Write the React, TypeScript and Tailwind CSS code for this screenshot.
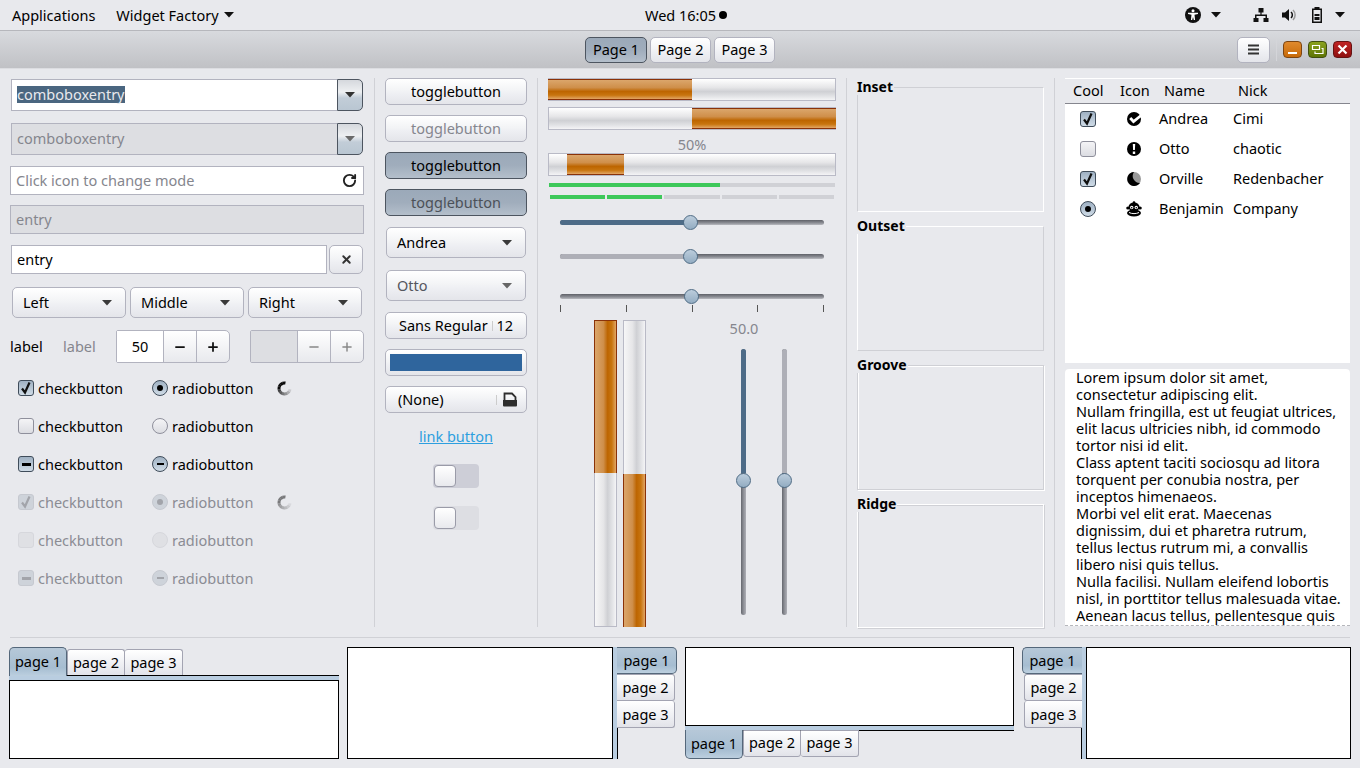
import React from "react";
import { RotateCw, X, Minus, Plus } from "lucide-react";

const FONT = "font-['Noto_Sans','Open_Sans',sans-serif] text-[14.5px] leading-[17px]";
const BTN = "border border-[#b2b3bf] rounded-[5px] bg-[linear-gradient(#ffffff,#f3f4f6_45%,#eeeff3_60%,#e4e5ea)] flex items-center";
const ACTIVE = "border border-[#4d5560] rounded-[5px] bg-[linear-gradient(#9ba9b9,#a0adbc_50%,#b4bfcb)] flex items-center";
const TROUGH = "bg-[linear-gradient(#ffffff,#e6e6e8_40%,#cfd0d4_60%,#e0e1e4_80%,#f4f4f6)] border border-[#b9bac6]";
const FILL = "bg-[linear-gradient(#dba66b,#cf8f4a_40%,#bd6500_60%,#c8750f_80%,#e2a665)] border-y border-[#8a3208]";
const VTROUGH = "bg-[linear-gradient(90deg,#f6f6f7,#e6e6e8_40%,#cfd0d4_60%,#e0e1e4_80%,#f4f4f6)] border border-[#b9bac6]";
const VFILL = "bg-[linear-gradient(90deg,#dba66b,#cf8f4a_40%,#bd6500_60%,#c8750f_80%,#e2a665)] border-x border-[#8a3208]";
const THUMB = "absolute w-[15px] h-[15px] rounded-full border border-[#4f6c85] bg-[linear-gradient(#bccddc,#93acc2)]";

const Caret = ({ c = "#3a3a3a" }: { c?: string }) => (
  <svg width="10" height="6" viewBox="0 0 10 6" className="shrink-0"><path d="M0 0h10L5 5.500z" fill={c} /></svg>
);

function boxCls(kind: string, off?: boolean) {
  if (off) return kind === "off" ? "border-[#d6d7dc] bg-[#dfe0e4]" : "border-[#c6c9d0] bg-[#ced3da]";
  return kind === "off"
    ? "border-[#8f909c] bg-[linear-gradient(#f4f4f6,#dcdde2)]"
    : "border-[#3f4c5a] bg-[linear-gradient(#9fb1c3,#cfdbe6)]";
}

function CheckBox({ kind, off }: { kind: "on" | "off" | "mixed"; off?: boolean }) {
  return (
    <span className={`w-4 h-4 rounded-[3px] border flex items-center justify-center shrink-0 ${boxCls(kind, off)}`}>
      {kind === "on" && <svg width="14" height="14" viewBox="0 0 14 14"><path d="M3 7.500L6 11.500 10.500 1.500" fill="none" stroke={off ? "#a2a4aa" : "#111"} strokeWidth="2.200" /></svg>}
      {kind === "mixed" && <span className={`w-[9px] h-[3px] ${off ? "bg-[#a2a4aa]" : "bg-black"}`} />}
    </span>
  );
}

function Radio({ kind, off }: { kind: "on" | "off" | "mixed"; off?: boolean }) {
  return (
    <span className={`w-4 h-4 rounded-full border flex items-center justify-center shrink-0 ${boxCls(kind, off)}`}>
      {kind === "on" && <span className={`w-[6px] h-[6px] rounded-full ${off ? "bg-[#a2a4aa]" : "bg-black"}`} />}
      {kind === "mixed" && <span className={`w-[7px] h-[2px] ${off ? "bg-[#a2a4aa]" : "bg-black"}`} />}
    </span>
  );
}

function Spinner({ off }: { off?: boolean }) {
  const p = (deg: number) => {
    const a = (deg * Math.PI) / 180;
    return `${(7.5 + 5.5 * Math.cos(a)).toFixed(2)} ${(7.5 + 5.5 * Math.sin(a)).toFixed(2)}`;
  };
  const segs = Array.from({ length: 10 }, (_, i) => `M${p(-80 - i * 27)}A5.500 5.500 0 0 0 ${p(-80 - (i + 1) * 27 - 1)}`);
  return (
    <svg width="15" height="15" viewBox="0 0 15 15" className={off ? "opacity-50" : ""}>
      {segs.map((d, i) => (
        <path key={i} d={d} fill="none" stroke="#000" strokeWidth="3" opacity={i < 4 ? 0.95 : 0.85 - (i - 3) * 0.12} />
      ))}
    </svg>
  );
}

function CheckRow({ c, r, off, spin }: { c: "on" | "off" | "mixed"; r: "on" | "off" | "mixed"; off?: boolean; spin?: boolean }) {
  const t = off ? "text-[#8b8c94]" : "text-black";
  return (
    <div className="flex items-center h-[38px] pl-2">
      <div className="w-[134px] flex items-center gap-1"><CheckBox kind={c} off={off} /><span className={t}>checkbutton</span></div>
      <div className="w-[125px] flex items-center gap-1"><Radio kind={r} off={off} /><span className={t}>radiobutton</span></div>
      {spin && <Spinner off={off} />}
    </div>
  );
}

function ComboEntry({ off }: { off?: boolean }) {
  return (
    <div className="flex h-[32px] mx-px">
      <div className={`flex-1 border border-r-0 border-[#b2b3bf] flex items-center pl-[5px] pb-[2px] ${off ? "bg-[#dddee2] text-[#85868e]" : "bg-white"}`}>
        {off ? "comboboxentry" : <span className="bg-[#4a6680] text-[#e8e9ed] leading-[17px]">comboboxentry</span>}
      </div>
      <div className="w-[26px] border border-[#4d5560] rounded-r-[5px] bg-[linear-gradient(#d5d8dd,#eef0f2_40%,#c2cdd8_60%,#b9c6d2)] flex items-center justify-center">
        <Caret c={off ? "#6a6a6a" : "#333"} />
      </div>
    </div>
  );
}

function Col1() {
  return (
    <div className="w-[354px] shrink-0 flex flex-col">
      <div className="pt-px"><ComboEntry /></div>
      <div className="pt-[12px]"><ComboEntry off /></div>
      <div className="mt-[11px] h-[29px] border border-[#b2b3bf] bg-white flex items-center justify-between pl-[5px] pr-[6px] text-[#85868e]">
        Click icon to change mode <RotateCw size={15} strokeWidth={3} color="#222" />
      </div>
      <div className="mt-[10px] h-[29px] border border-[#b2b3bf] bg-[#dddee2] flex items-center pl-[5px] text-[#85868e]">entry</div>
      <div className="mt-[11px] mx-px flex gap-[2px] h-[29px]">
        <div className="flex-1 border border-[#b2b3bf] bg-white flex items-center pl-[5px]">entry</div>
        <div className={`${BTN} w-[34px] justify-center`}><X size={13} strokeWidth={3.500} color="#333" /></div>
      </div>
      <div className="mt-[13px] mx-[2px] flex gap-1 h-[31px]">
        {["Left", "Middle", "Right"].map((t) => (
          <div key={t} className={`${BTN} flex-1 justify-between pl-[10px] pr-[13px]`}>{t}<Caret /></div>
        ))}
      </div>
      <div className="mt-[12px] flex items-center h-[33px]">
        <span className="w-[53px]">label</span>
        <span className="w-[53px] text-[#85868e]">label</span>
        <div className="w-[114px] h-full flex border border-[#b2b3bf] rounded-r-[5px] rounded-l-[2px] bg-[linear-gradient(#ffffff,#e8e9ed)]">
          <div className="w-[47px] bg-white flex items-center justify-center border-r border-[#b2b3bf]">50</div>
          <div className="flex-1 flex items-center justify-center border-r border-[#b2b3bf]"><Minus size={14} strokeWidth={3} color="#111" /></div>
          <div className="flex-1 flex items-center justify-center"><Plus size={14} strokeWidth={3} color="#111" /></div>
        </div>
        <div className="ml-[20px] w-[114px] h-full flex border border-[#b2b3bf] rounded-r-[5px] rounded-l-[2px] bg-[linear-gradient(#ffffff,#e8e9ed)]">
          <div className="w-[47px] bg-[#dddee2] border-r border-[#b2b3bf]" />
          <div className="flex-1 flex items-center justify-center border-r border-[#b2b3bf]"><Minus size={14} strokeWidth={2.500} color="#888" /></div>
          <div className="flex-1 flex items-center justify-center"><Plus size={14} strokeWidth={2.500} color="#888" /></div>
        </div>
      </div>
      <div className="mt-[6px]">
        <CheckRow c="on" r="on" spin />
        <CheckRow c="off" r="off" />
        <CheckRow c="mixed" r="mixed" />
        <CheckRow c="on" r="on" off spin />
        <CheckRow c="off" r="off" off />
        <CheckRow c="mixed" r="mixed" off />
      </div>
    </div>
  );
}

function Switch({ off }: { off?: boolean }) {
  return (
    <div className={`w-[46px] h-[24px] rounded-[4px] ${off ? "bg-[#dddee3]" : "bg-[#cdced7]"} flex items-center pl-px`}>
      <div className="w-[22px] h-[22px] rounded-[4px] border border-[#9a9ba8] bg-[linear-gradient(#ffffff,#e8e9ed)]" />
    </div>
  );
}

function Col2() {
  const tb = "h-[27px] justify-center";
  return (
    <div className="w-[142px] shrink-0 flex flex-col items-stretch">
      <div className={`${BTN} ${tb}`}>togglebutton</div>
      <div className={`${BTN} ${tb} mt-[10px] text-[#85868e]`}>togglebutton</div>
      <div className={`${ACTIVE} ${tb} mt-[10px]`}>togglebutton</div>
      <div className={`${ACTIVE} ${tb} mt-[10px] text-[#4c5158]`}>togglebutton</div>
      <div className={`${BTN} mx-px mt-[11px] h-[31px] justify-between pl-[10px] pr-[13px]`}>Andrea<Caret /></div>
      <div className={`${BTN} mx-px mt-[12px] h-[31px] justify-between pl-[10px] pr-[13px] text-[#55565e]`}>Otto<Caret c="#666" /></div>
      <div className={`${BTN} mt-[11px] h-[27px] pl-[13px] pr-[13px] justify-between`}>
        <span>Sans Regular</span><span className="w-px h-[10px] bg-[#ccc]" /><span>12</span>
      </div>
      <div className={`${BTN} mt-[10px] h-[27px] px-1 border-[#8b8c98]`}>
        <div className="w-full h-[17px] bg-[#2f659d]" />
      </div>
      <div className={`${BTN} mt-[10px] h-[27px] pl-[12px] pr-2 justify-between`}>
        <span>(None)</span>
        <span className="flex items-center gap-[5px]">
          <span className="w-px h-[10px] bg-[#ccc]" />
          <svg width="16" height="15" viewBox="0 0 16 15">
            <path d="M2.500 8V1.500h7.500L13.500 5V8" fill="none" stroke="#2e2e2e" strokeWidth="1.800" />
            <path d="M1 8h14v5.500a1 1 0 0 1-1 1H2a1 1 0 0 1-1-1z" fill="#2e2e2e" />
          </svg>
        </span>
      </div>
      <div className="mt-[15px] h-[18px] text-center"><span className="text-[#2d9fdf] underline">link button</span></div>
      <div className="mt-[18px] flex justify-center"><Switch /></div>
      <div className="mt-[18px] flex justify-center"><Switch off /></div>
    </div>
  );
}

function HSlider({ color, pos }: { color?: string; pos: number }) {
  return (
    <div className="relative h-[5px] mx-[12px] rounded-full bg-[linear-gradient(#5f6168,#8d8f96_60%,#b9bac0)]">
      {color && <div className={`absolute left-0 top-0 h-full rounded-l-full ${color}`} style={{ width: pos }} />}
      <div className={`${THUMB} top-[-5px]`} style={{ left: pos - 7 }} />
    </div>
  );
}

function VSlider({ color }: { color: string }) {
  return (
    <div className="relative w-[5px] h-[266px] rounded-full bg-[linear-gradient(90deg,#65676e,#8d8f96_50%,#aeafb6)]">
      <div className={`w-full h-[124px] rounded-t-full ${color}`} />
      <div className={`${THUMB} left-[-5px] top-[124px]`} />
    </div>
  );
}

function Col3() {
  return (
    <div className="w-[288px] shrink-0 flex flex-col">
      <div className={`h-[23px] flex ${TROUGH} border-l-0`}><div className={`w-[144px] ${FILL}`} /></div>
      <div className={`h-[23px] mt-[6px] flex justify-end ${TROUGH} border-r-0`}><div className={`w-[144px] ${FILL}`} /></div>
      <div className="h-[17px] mt-[6px] text-center text-[#85868e]">50%</div>
      <div className={`h-[23px] flex pl-[18px] ${TROUGH}`}><div className={`w-[57px] ${FILL}`} /></div>
      <div className="h-[4px] mt-[7px] mx-px bg-[#d0d1d6]"><div className="h-full w-[171px] bg-[#3dc85a]" /></div>
      <div className="mt-[8px] mx-[2px] flex gap-[2px]">
        {[1, 1, 0, 0, 0].map((g, i) => (
          <div key={i} className={`flex-1 h-[4px] ${g ? "bg-[#3dc85a]" : "bg-[#d0d1d6]"}`} />
        ))}
      </div>
      <div className="mt-[21px]"><HSlider color="bg-[#4d6b87]" pos={130} /></div>
      <div className="mt-[29px]"><HSlider color="bg-[#aeafb7]" pos={130} /></div>
      <div className="mt-[35px]"><HSlider pos={131} /></div>
      <div className="mt-[6px] mx-[12px] flex justify-between">
        {[0, 1, 2, 3, 4].map((i) => <span key={i} className="w-px h-[7px] bg-[#555]" />)}
      </div>
      <div className="mt-[8px] flex flex-1 min-h-0">
        <div className={`ml-[46px] w-[23px] h-full flex flex-col ${VTROUGH}`}>
          <div className={`h-[153px] -mx-px -mt-px border-t ${VFILL}`} />
        </div>
        <div className={`ml-[6px] w-[23px] h-full flex flex-col justify-end ${VTROUGH}`}>
          <div className={`h-[153px] -mx-px -mb-px ${VFILL}`} />
        </div>
        <div className="ml-[95px] flex flex-col items-start w-[46px]">
          <div className="text-[#85868e] h-[17px] w-[50px] -ml-[22px] text-center">50.0</div>
          <div className="mt-[12px] flex gap-[36px]">
            <VSlider color="bg-[#4d6b87]" />
            <VSlider color="bg-[#aeafb7]" />
          </div>
        </div>
      </div>
    </div>
  );
}

function Frame({ label, cls, h, mt }: { label: string; cls: string; h: string; mt: string }) {
  return (
    <div className={`relative ${h} ${mt} border ${cls}`}>
      <span className="absolute left-[-1px] top-[-10px] bg-[#e8e9ed] pr-px font-bold text-[14px]">{label}</span>
    </div>
  );
}

function Col4() {
  return (
    <div className="w-[187px] shrink-0 pt-[9px]">
      <Frame label="Inset" h="h-[125px]" mt="" cls="border-t-[#cfd0d5] border-l-[#cfd0d5] border-r-white border-b-white" />
      <Frame label="Outset" h="h-[125px]" mt="mt-[14px]" cls="border-t-white border-l-white border-r-[#cfd0d5] border-b-[#cfd0d5]" />
      <Frame label="Groove" h="h-[125px]" mt="mt-[14px]" cls="border-[#cfd0d5] shadow-[inset_1px_1px_0_#fff,1px_1px_0_#fff]" />
      <Frame label="Ridge" h="h-[124px]" mt="mt-[14px]" cls="border-white shadow-[inset_1px_1px_0_#cfd0d5,1px_1px_0_#cfd0d5]" />
    </div>
  );
}

const IconCheck = () => (
  <svg width="16" height="16" viewBox="0 0 16 16"><circle cx="8" cy="8" r="7" fill="#000" /><path d="M4.200 7l3.300 3.500L15 4.500" fill="none" stroke="#fff" strokeWidth="2.800" /></svg>
);
const IconWarn = () => (
  <svg width="16" height="16" viewBox="0 0 16 16"><circle cx="8" cy="8" r="7" fill="#000" /><path d="M6.800 3h2.400l-.3 6H7.100zM6.800 10.500h2.400V13H6.800z" fill="#fff" /></svg>
);
const IconMoon = () => (
  <svg width="16" height="16" viewBox="0 0 16 16"><circle cx="8" cy="8" r="7" fill="#9a9a9a" /><path d="M8 1A7 7 0 1 0 14 12A7 7 0 0 1 8 1z" fill="#000" /></svg>
);
const IconMonkey = () => (
  <svg width="18" height="16" viewBox="0 0 18 16">
    <circle cx="9" cy="1.500" r="1.300" fill="#000" />
    <ellipse cx="9" cy="6" rx="5.500" ry="4.500" fill="#000" />
    <ellipse cx="3" cy="7" rx="1.800" ry="1.500" fill="#000" /><ellipse cx="15" cy="7" rx="1.800" ry="1.500" fill="#000" />
    <circle cx="6.700" cy="6.500" r="1.700" fill="#fff" /><circle cx="11.300" cy="6.500" r="1.700" fill="#fff" />
    <circle cx="6.700" cy="6.800" r=".8" fill="#000" /><circle cx="11.300" cy="6.800" r=".8" fill="#000" />
    <ellipse cx="9" cy="12" rx="7" ry="3.500" fill="#000" />
    <path d="M4 11.500c3 1.500 7 1.500 10 0" stroke="#fff" strokeWidth="1" fill="none" />
  </svg>
);

function Col5() {
  const rows: [React.ReactNode, React.ReactNode, string, string][] = [
    [<CheckBox kind="on" />, <IconCheck />, "Andrea", "Cimi"],
    [<CheckBox kind="off" />, <IconWarn />, "Otto", "chaotic"],
    [<CheckBox kind="on" />, <IconMoon />, "Orville", "Redenbacher"],
    [<Radio kind="on" />, <IconMonkey />, "Benjamin", "Company"],
  ];
  const lines = [
    "Lorem ipsum dolor sit amet,", "consectetur adipiscing elit.", "Nullam fringilla, est ut feugiat ultrices,",
    "elit lacus ultricies nibh, id commodo", "tortor nisi id elit.", "Class aptent taciti sociosqu ad litora",
    "torquent per conubia nostra, per", "inceptos himenaeos.", "Morbi vel elit erat. Maecenas",
    "dignissim, dui et pharetra rutrum,", "tellus lectus rutrum mi, a convallis", "libero nisi quis tellus.",
    "Nulla facilisi. Nullam eleifend lobortis", "nisl, in porttitor tellus malesuada vitae.",
    "Aenean lacus tellus, pellentesque quis", "rutrum lectus, in tincidunt dolor.",
  ];
  return (
    <div className="w-[285px] shrink-0 flex flex-col">
      <div className="h-[285px] bg-white border-t border-white">
        <div className="h-[25px] bg-[#e8e9ed] border-b border-[#85868e] flex items-center pb-[2px]">
          <span className="w-[55px] pl-2">Cool</span>
          <span className="w-[44px]">Icon</span>
          <span className="w-[74px]">Name</span>
          <span>Nick</span>
        </div>
        <div>
          {rows.map(([a, b, n, k]) => (
            <div key={n} className="h-[30px] flex items-center">
              <div className="w-[46px] flex justify-center">{a}</div>
              <div className="w-[46px] flex justify-center">{b}</div>
              <div className="w-[74px] pl-[2px] pb-[2px] whitespace-nowrap">{n}</div>
              <div className="pl-[2px] pb-[2px]">{k}</div>
            </div>
          ))}
        </div>
      </div>
      <div className="mt-[6px] h-[257px] bg-white rounded-t-[4px] border-b border-dashed border-[#b5b6bb] overflow-hidden pl-[11px]">
        {lines.map((l) => <div key={l} className="whitespace-nowrap h-[17px]">{l}</div>)}
      </div>
    </div>
  );
}

const TAB = "flex items-center justify-center bg-[linear-gradient(#ffffff,#eeeff3_60%,#e2e3e9)] border-[#a3a4b2]";
const TABON = "flex items-center justify-center bg-[linear-gradient(#b6c8d8,#a6bdd1_70%,#bccfdf)] border-[#54677a]";
const BAND = "bg-[#b9cde0]";

function NbTop() {
  return (
    <div className="w-[330px] flex flex-col">
      <div className="h-[29px] flex border-b border-black">
        <div className={`${TABON} w-[58px] h-[29px] pb-[2px] border border-b-0 rounded-t-[5px]`}>page 1</div>
        <div className={`${TAB} w-[58px] h-[26px] mt-[2px] border border-b-0 rounded-t-[3px]`}>page 2</div>
        <div className={`${TAB} w-[58px] h-[26px] mt-[2px] border border-b-0 border-l-0 rounded-t-[3px]`}>page 3</div>
      </div>
      <div className={`h-[4px] ${BAND}`} />
      <div className="flex-1 bg-white border border-black" />
    </div>
  );
}
function NbBottom() {
  return (
    <div className="w-[329px] flex flex-col">
      <div className="flex-1 bg-white border border-black" />
      <div className={`h-[4px] ${BAND}`} />
      <div className="h-[29px] flex border-t border-black">
        <div className={`${TABON} w-[58px] h-[29px] pb-[2px] -mt-px border border-t-0 rounded-b-[5px]`}>page 1</div>
        <div className={`${TAB} w-[58px] h-[27px] pb-[2px] -mt-px border rounded-b-[3px]`}>page 2</div>
        <div className={`${TAB} w-[58px] h-[27px] pb-[2px] -mt-px border border-l-0 rounded-b-[3px]`}>page 3</div>
      </div>
    </div>
  );
}
function NbRight() {
  return (
    <div className="w-[330px] flex">
      <div className="w-[266px] bg-white border border-black" />
      <div className={`w-[4px] ${BAND}`} />
      <div className="flex-1 flex flex-col border-l border-black">
        <div className={`${TABON} h-[27px] -ml-px border border-l-0 rounded-r-[5px] w-[60px]`}>page 1</div>
        <div className={`${TAB} h-[27px] -ml-px border border-l-0 rounded-r-[3px] w-[58px]`}>page 2</div>
        <div className={`${TAB} h-[27px] -ml-px border border-l-0 border-t-0 rounded-r-[3px] w-[58px]`}>page 3</div>
      </div>
    </div>
  );
}
function NbLeft() {
  return (
    <div className="w-[329px] flex">
      <div className="w-[60px] flex flex-col items-end border-r border-black">
        <div className={`${TABON} h-[27px] w-[60px] -mr-px border border-r-0 rounded-l-[5px]`}>page 1</div>
        <div className={`${TAB} h-[27px] w-[58px] -mr-px border border-r-0 rounded-l-[3px]`}>page 2</div>
        <div className={`${TAB} h-[27px] w-[58px] -mr-px border border-r-0 border-t-0 rounded-l-[3px]`}>page 3</div>
      </div>
      <div className={`w-[4px] ${BAND}`} />
      <div className="flex-1 bg-white border border-black" />
    </div>
  );
}

const Sep = () => <div className="w-px self-stretch bg-[#d0d1d6] mx-[10px] shrink-0" />;

function TopBar() {
  return (
    <div className="h-[31px] bg-[#e8e9ed] border-b border-[#b6b7bc] flex items-center">
      <div className="flex-1 flex items-center pl-3">
        <span>Applications</span>
        <span className="ml-[21px]">Widget Factory</span>
        <span className="ml-[5px]"><Caret c="#111" /></span>
      </div>
      <div className="flex items-center ml-[15px]">
        <span>Wed 16:05</span>
        <span className="w-2 h-2 rounded-full bg-black ml-[3px]" />
      </div>
      <div className="flex-1 flex items-center justify-end pr-[15px]">
        <svg width="16" height="16" viewBox="0 0 16 16"><circle cx="8" cy="8" r="8" fill="#111" /><circle cx="8" cy="3.800" r="1.500" fill="#fff" /><path d="M3 5.800h10v1.200l-3.500.8.6 5.200H8.800L8 10l-.8 3H5.900l.6-5.200L3 7z" fill="#fff" /></svg>
        <span className="ml-[10px]"><Caret c="#111" /></span>
        <svg className="ml-[32px]" width="16" height="16" viewBox="0 0 16 16"><path d="M5.500 1h5v4.500H8.600V7.500H14V11h1.500v4h-5v-4H12.500V9H3.500v2H5.500v4h-5v-4H2V7.500H7.400V5.500H5.500z" fill="#111" /></svg>
        <svg className="ml-[12px]" width="16" height="16" viewBox="0 0 16 16"><path d="M1 5.500h3L8 2v12L4 10.500H1z" fill="#111" /><path d="M10 5a4 4 0 0 1 0 6" stroke="#111" strokeWidth="1.500" fill="none" /><path d="M12 3a7 7 0 0 1 0 10" stroke="#999" strokeWidth="1.500" fill="none" /></svg>
        <svg className="ml-[12px]" width="16" height="16" viewBox="0 0 16 16"><path fillRule="evenodd" d="M5.500 0h5v1.500H13V16H3V1.500h2.500zM4.500 3v11.500h7V3z" fill="#111" /><rect x="5.500" y="7" width="5" height="2" fill="#111" /><rect x="5.500" y="10" width="5" height="3" fill="#111" /></svg>
        <span className="ml-[10px]"><Caret c="#111" /></span>
      </div>
    </div>
  );
}

function TitleBar() {
  return (
    <div className="h-[38px] bg-[linear-gradient(#d8dade,#c0c1c5)] border-b border-[#dcdde1] flex items-center">
      <div className="flex-1" />
      <div className="flex gap-[3px] h-[26px] ml-[8px]">
        <div className={`${ACTIVE} w-[62px] justify-center`}>Page 1</div>
        <div className={`${BTN} w-[61px] justify-center border-[#9a9ba6]`}>Page 2</div>
        <div className={`${BTN} w-[61px] justify-center border-[#9a9ba6]`}>Page 3</div>
      </div>
      <div className="flex-1 flex items-center justify-end pr-[8px]">
        <div className={`${BTN} w-[33px] h-[26px] justify-center border-[#9a9ba6]`}>
          <svg width="12" height="11" viewBox="0 0 12 11"><path d="M0 .5h11v2H0zM0 4.500h11v2H0zM0 8.500h11v2H0z" fill="#333" /></svg>
        </div>
        <span className="w-px h-[22px] bg-[#d4d5d9] mx-[6px]" />
        <div className="flex gap-[6px]">
          <div className="w-[19px] h-[17px] rounded-[4px] border border-[#7d4510] bg-[linear-gradient(#e08a2e,#c76a08)] flex items-end justify-center pb-[3px]">
            <span className="w-[9px] h-[2px] bg-white" />
          </div>
          <div className="w-[19px] h-[17px] rounded-[4px] border border-[#414f10] bg-[linear-gradient(#8aa21f,#5f7504)] flex items-center justify-center">
            <svg width="13" height="11" viewBox="0 0 13 11"><path d="M1.500 1.500h7v4h-7zM10.500 4.500h1.500v5h-8V7.500" fill="none" stroke="#fff" strokeWidth="1.200" /></svg>
          </div>
          <div className="w-[19px] h-[17px] rounded-[4px] border border-[#651313] bg-[linear-gradient(#c02424,#8f1010)] flex items-center justify-center">
            <svg width="11" height="11" viewBox="0 0 11 11"><path d="M1.500 1.500l8 8M9.500 1.500l-8 8" stroke="#fff" strokeWidth="2.200" /></svg>
          </div>
        </div>
      </div>
    </div>
  );
}

export default function App() {
  return (
    <div className={`w-[1360px] h-[768px] overflow-hidden bg-[#e8e9ed] text-black ${FONT}`}>
      <TopBar />
      <TitleBar />
      <div className="flex h-[549px] mt-[9px] pl-[10px]">
        <Col1 />
        <Sep />
        <Col2 />
        <Sep />
        <Col3 />
        <Sep />
        <Col4 />
        <Sep />
        <Col5 />
      </div>
      <div className="h-px bg-[#d0d1d6] mt-[10px] mx-[10px]" />
      <div className="mt-[9px] h-[112px] ml-[9px] flex gap-[8px]">
        <NbTop />
        <NbRight />
        <NbBottom />
        <NbLeft />
      </div>
    </div>
  );
}
